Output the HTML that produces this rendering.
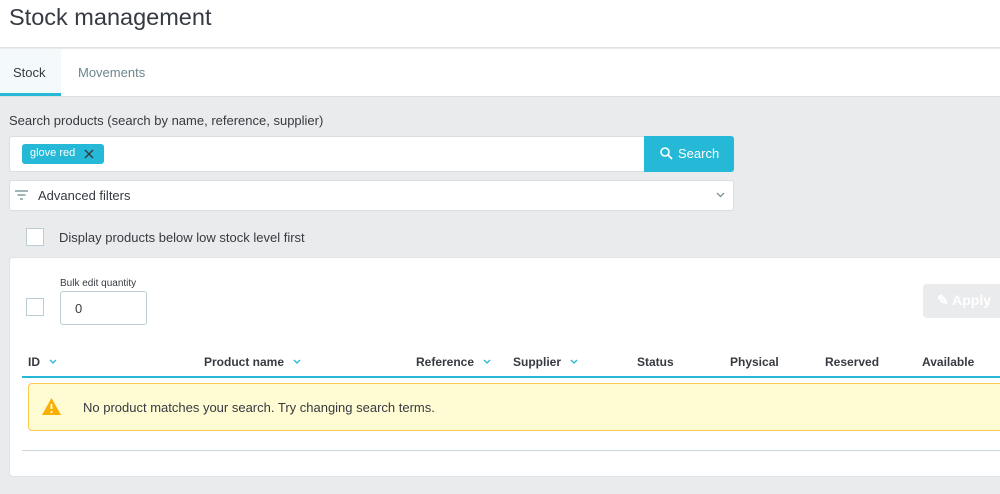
<!DOCTYPE html>
<html><head><style>
*{box-sizing:border-box;margin:0;padding:0}
body{width:1000px;height:494px;overflow:hidden;background:#eaebec;font-family:"Liberation Sans",sans-serif;color:#363a41;position:relative}
.a{position:absolute}
.th{position:absolute;top:355px;font-size:12px;font-weight:bold;color:#363a41}
.car{display:inline-block;margin-left:9px;vertical-align:2px}
</style></head><body>
<div class="a" style="left:0;top:0;width:1000px;height:48px;background:#fff;border-bottom:1px solid #dfe3e6"></div>
<div class="a" style="left:9px;top:4px;font-size:23.5px;color:#363a41">Stock management</div>
<div class="a" style="left:0;top:49px;width:1000px;height:48px;background:#fff;border-bottom:1px solid #dcdfe2"></div>
<div class="a" style="left:0;top:49px;width:61px;height:47px;background:#f4f9fb;border-bottom:3px solid #25b9d7"></div>
<div class="a" style="left:13px;top:65px;font-size:13px">Stock</div>
<div class="a" style="left:78px;top:65px;font-size:13px;color:#6c868e">Movements</div>
<div class="a" style="left:9px;top:113px;font-size:13px">Search products (search by name, reference, supplier)</div>
<div class="a" style="left:9px;top:136px;width:725px;height:36px;background:#fff;border:1px solid #d9dee2;border-radius:3px"></div>
<div class="a" style="left:22px;top:144px;width:82px;height:20px;background:#25b9d7;border-radius:3px;color:#fff;font-size:11px;padding:3px 0 0 8px">glove red</div>
<svg class="a" style="left:84px;top:149px" width="10" height="10"><path d="M1 1l8 8M9 1l-8 8" stroke="#363a41" stroke-width="1.4"/></svg>
<div class="a" style="left:644px;top:136px;width:90px;height:36px;background:#25b9d7;border-radius:0 3px 3px 0;color:#fff;font-size:13px;padding:10px 0 0 16px">
<svg width="13" height="13" viewBox="0 0 13 13" style="vertical-align:-2px;margin-right:5px"><circle cx="5" cy="5" r="4" stroke="#fff" stroke-width="1.6" fill="none"/><path d="M8 8l4 4" stroke="#fff" stroke-width="1.8"/></svg>Search</div>
<div class="a" style="left:9px;top:180px;width:725px;height:31px;background:#fff;border:1px solid #d9dee2;border-radius:3px"></div>
<svg class="a" style="left:15px;top:190px" width="13" height="10"><path d="M0 1h13M2.5 5h8M5 9h3" stroke="#6c868e" stroke-width="1.3"/></svg>
<div class="a" style="left:38px;top:188px;font-size:13px">Advanced filters</div>
<svg class="a" style="left:716px;top:192px" width="9" height="6"><path d="M1 1l3.5 3.5L8 1" stroke="#6c868e" fill="none" stroke-width="1.2"/></svg>
<div class="a" style="left:26px;top:228px;width:18px;height:18px;background:#fff;border:1.5px solid #bbcdd2"></div>
<div class="a" style="left:59px;top:230px;font-size:13px">Display products below low stock level first</div>
<div class="a" style="left:9px;top:257px;width:1000px;height:220px;background:#fff;border-radius:4px;border:1px solid #e1e4e6"></div>
<div class="a" style="left:60px;top:278px;font-size:10px">Bulk edit quantity</div>
<div class="a" style="left:26px;top:298px;width:18px;height:18px;border:1.5px solid #bbcdd2"></div>
<div class="a" style="left:60px;top:291px;width:87px;height:34px;border:1px solid #bbcdd2;border-radius:3px;font-size:13px;padding:9px 0 0 14px">0</div>
<div class="a" style="left:923px;top:284px;width:90px;height:34px;background:#eaebec;border-radius:4px;color:#fff;font-size:14px;font-weight:bold;padding:8px 0 0 14px">✎ Apply</div>
<div class="th" style="left:28px">ID<svg class="car" width="8" height="5"><path d="M1 1l3 3l3-3" stroke="#25b9d7" fill="none" stroke-width="1.3"/></svg></div>
<div class="th" style="left:204px">Product name<svg class="car" width="8" height="5"><path d="M1 1l3 3l3-3" stroke="#25b9d7" fill="none" stroke-width="1.3"/></svg></div>
<div class="th" style="left:416px">Reference<svg class="car" width="8" height="5"><path d="M1 1l3 3l3-3" stroke="#25b9d7" fill="none" stroke-width="1.3"/></svg></div>
<div class="th" style="left:513px">Supplier<svg class="car" width="8" height="5"><path d="M1 1l3 3l3-3" stroke="#25b9d7" fill="none" stroke-width="1.3"/></svg></div>
<div class="th" style="left:637px">Status</div>
<div class="th" style="left:730px">Physical</div>
<div class="th" style="left:825px">Reserved</div>
<div class="th" style="left:922px">Available</div>
<div class="a" style="left:22px;top:376px;width:980px;height:2px;background:#25b9d7"></div>
<div class="a" style="left:28px;top:383px;width:980px;height:48px;background:#fffbd3;border:1px solid #fcc94f;border-radius:4px"></div>
<svg class="a" style="left:42px;top:398px" width="19" height="17"><path d="M9.5 0L19 17H0z" fill="#fab000"/><path d="M9.5 6v5M9.5 13v2" stroke="#fff" stroke-width="1.8"/></svg>
<div class="a" style="left:83px;top:400px;font-size:13px">No product matches your search. Try changing search terms.</div>
<div class="a" style="left:22px;top:450px;width:980px;height:1px;background:#c9d6de"></div>
</body></html>
